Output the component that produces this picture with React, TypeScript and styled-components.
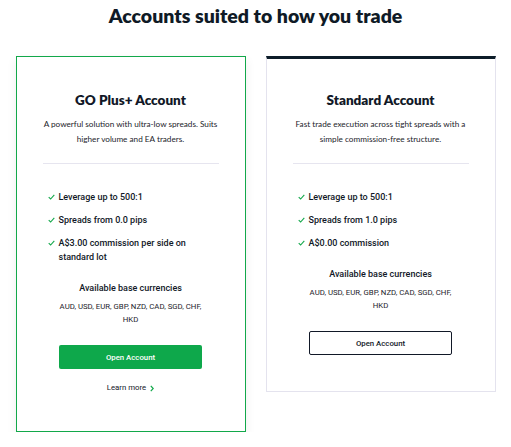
import React from 'react'
import styled, { createGlobalStyle } from 'styled-components'

const Global = createGlobalStyle`
  body {
    margin: 0;
    background: #fff;
    font-family: Lato, "Noto Sans", sans-serif;
    color: #111827;
  }
`

const Page = styled.div`
  width: 480px;
  margin: 0 auto;
  padding-top: 4px;
`

const Heading = styled.h1`
  margin: 0;
  text-align: center;
  font-size: 19.5px;
  line-height: 24px;
  font-weight: 800;
  color: #0f1a26;
`

const Row = styled.div`
  display: flex;
  gap: 20px;
  align-items: flex-start;
  margin-top: 28px;
`

const Card = styled.div<{ $featured?: boolean }>`
  flex: 1;
  box-sizing: border-box;
  display: flex;
  flex-direction: column;
  align-items: center;
  padding: ${p => (p.$featured ? '35px' : '33px')} 26px 36px;
  background: #fff;
  border: ${p => (p.$featured ? '1.5px solid #12a84a' : '1px solid #e4e3ee')};
  border-top: ${p => (p.$featured ? '1.5px solid #12a84a' : '3px solid #0d1d29')};
  box-shadow: ${p => (p.$featured ? '0 4px 10px rgba(0,0,0,0.07)' : 'none')};
`

const Title = styled.h2`
  margin: 0;
  font-size: 13.5px;
  line-height: 16px;
  font-weight: 800;
  color: #111827;
`

const Desc = styled.p`
  margin: 9px 0 0;
  text-align: center;
  white-space: nowrap;
  font-size: 8.2px;
  line-height: 15px;
  color: #1d1d2b;
`

const Divider = styled.hr`
  width: 100%;
  margin: 16px 0 0;
  border: 0;
  border-top: 1px solid #e6e5ef;
`

const List = styled.ul`
  list-style: none;
  align-self: stretch;
  margin: 26px 0 0;
  padding: 0 0 0 5px;
  display: flex;
  flex-direction: column;
  gap: 9px;
`

const Item = styled.li`
  display: flex;
  align-items: flex-start;
  gap: 4px;
  font-family: Roboto, "Liberation Sans", sans-serif;
  font-size: 9px;
  line-height: 14px;
  font-weight: 500;
  color: #111827;
  svg {
    flex: none;
    margin-top: 4px;
  }
`

const SubTitle = styled.div`
  margin-top: 17px;
  font-family: Roboto, "Liberation Sans", sans-serif;
  font-size: 9px;
  line-height: 14px;
  font-weight: 500;
`

const Currencies = styled.div`
  margin-top: 6px;
  text-align: center;
  white-space: nowrap;
  font-family: Roboto, "Liberation Sans", sans-serif;
  font-size: 7.8px;
  line-height: 12.5px;
  color: #1d1d2b;
`

const Button = styled.button<{ $filled?: boolean }>`
  margin-top: 19px;
  width: 143px;
  height: 24px;
  border-radius: 2px;
  border: ${p => (p.$filled ? 'none' : '1px solid #111827')};
  background: ${p => (p.$filled ? '#0ea84b' : '#fff')};
  color: ${p => (p.$filled ? '#fff' : '#111827')};
  font-family: Roboto, "Liberation Sans", sans-serif;
  font-size: 7.8px;
  font-weight: 500;
  cursor: pointer;
`

const LearnMore = styled.a`
  margin-top: 12px;
  display: flex;
  align-items: center;
  gap: 4px;
  font-family: Roboto, "Liberation Sans", sans-serif;
  font-size: 7.8px;
  line-height: 14px;
  color: #111827;
  text-decoration: none;
`

const Check = () => (
  <svg width="7" height="6" viewBox="0 0 7 6">
    <polyline points="0.7,3.2 2.6,5 6.3,0.8" fill="none" stroke="#12a84a" strokeWidth="1.1" />
  </svg>
)

const Chevron = () => (
  <svg width="4" height="7" viewBox="0 0 4 7">
    <polyline points="0.8,0.8 3.2,3.5 0.8,6.2" fill="none" stroke="#12a84a" strokeWidth="1.2" />
  </svg>
)

type Account = {
  title: string
  desc: string[]
  features: string[][]
  featured?: boolean
}

const accounts: Account[] = [
  {
    title: 'GO Plus+ Account',
    desc: ['A powerful solution with ultra-low spreads. Suits', 'higher volume and EA traders.'],
    features: [['Leverage up to 500:1'], ['Spreads from 0.0 pips'], ['A$3.00 commission per side on', 'standard lot']],
    featured: true,
  },
  {
    title: 'Standard Account',
    desc: ['Fast trade execution across tight spreads with a', 'simple commission-free structure.'],
    features: [['Leverage up to 500:1'], ['Spreads from 1.0 pips'], ['A$0.00 commission']],
  },
]

const Lines = ({ lines }: { lines: string[] }) => (
  <>
    {lines.map((line, i) => (
      <React.Fragment key={line}>
        {i > 0 && <br />}
        {line}
      </React.Fragment>
    ))}
  </>
)

const App = () => {
  return (
    <Page>
      <Global />
      <Heading>Accounts suited to how you trade</Heading>
      <Row>
        {accounts.map(acc => (
          <Card key={acc.title} $featured={acc.featured}>
            <Title>{acc.title}</Title>
            <Desc>
              <Lines lines={acc.desc} />
            </Desc>
            <Divider />
            <List>
              {acc.features.map(f => (
                <Item key={f[0]}>
                  <Check />
                  <span>
                    <Lines lines={f} />
                  </span>
                </Item>
              ))}
            </List>
            <SubTitle>Available base currencies</SubTitle>
            <Currencies>
              <Lines lines={['AUD, USD, EUR, GBP, NZD, CAD, SGD, CHF,', 'HKD']} />
            </Currencies>
            <Button $filled={acc.featured}>Open Account</Button>
            {acc.featured && (
              <LearnMore href="#">
                Learn more <Chevron />
              </LearnMore>
            )}
          </Card>
        ))}
      </Row>
    </Page>
  )
}

export default App
